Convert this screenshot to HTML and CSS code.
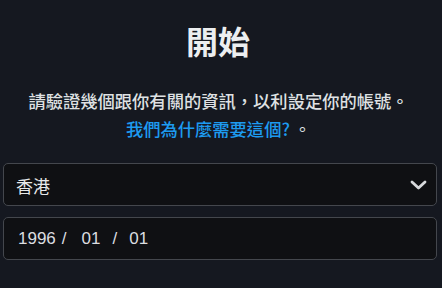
FILE: index.html
```html
<!DOCTYPE html>
<html lang="zh-Hant">
<head>
<meta charset="utf-8">
<title>開始</title>
<link rel="stylesheet" href="styles.css">
</head>
<body>
<main class="page">
  <h1 class="title">開始</h1>
  <p class="lead">請驗證幾個跟你有關的資訊<span class="punct">，</span>以利設定你的帳號<span class="punct">。</span></p>
  <p class="why"><a class="why-link" href="#">我們為什麼需要這個?</a> <span class="punct">。</span></p>
  <div class="fields">
    <div class="field select">
      <span class="value">香港</span>
      <svg class="chevron" width="17" height="10" viewBox="0 0 17 10" aria-hidden="true">
        <polyline points="2,2 8.5,8 15,2" fill="none" stroke="#d8dadd" stroke-width="2.8" stroke-linecap="round" stroke-linejoin="round"/>
      </svg>
    </div>
    <div class="field date">
      <span class="seg">1996</span><span class="sep sep-a">/</span><span class="seg">01</span><span class="sep sep-b">/</span><span class="seg">01</span>
    </div>
  </div>
</main>
</body>
</html>
```

FILE: styles.css
```css
html, body {
  margin: 0;
  padding: 0;
  background: #151820;
}

body {
  width: 442px;
  height: 288px;
  overflow: hidden;
  font-family: "Noto Sans CJK TC", "Noto Sans", sans-serif;
  color: #e7e9ea;
}

.page {
  display: flex;
  flex-direction: column;
  padding: 20px 5px 0 3px;
}

.title {
  margin: 0;
  padding-right: 4px;
  font-size: 32px;
  line-height: 40px;
  font-weight: 700;
  text-align: center;
  color: #eceef0;
}

.lead {
  margin: 27px 0 0;
  padding-right: 3px;
  font-size: 17.3px;
  line-height: 28px;
  text-align: center;
  color: #dfe1e3;
  font-weight: 500;
}

.punct {
  font-family: "Noto Sans CJK SC", "Noto Sans CJK TC", sans-serif;
}

.why {
  margin: 0;
  padding-right: 3px;
  font-size: 17.3px;
  line-height: 28px;
  text-align: center;
  color: #dfe1e3;
}

.why-link {
  color: #1d9bf0;
  text-decoration: none;
  font-weight: 500;
}

.fields {
  display: flex;
  flex-direction: column;
  gap: 11px;
  margin-top: 20px;
}

.field {
  height: 43px;
  box-sizing: border-box;
  border: 1px solid #44474d;
  border-radius: 5px;
  background: #0f1013;
  display: flex;
  align-items: center;
}

.select {
  padding: 0 9px 0 12px;
  justify-content: space-between;
}

.value {
  font-size: 17px;
  color: #e7e9ea;
  padding-top: 2px;
}

.chevron {
  display: block;
}

.date {
  padding-left: 14px;
  font-family: "Liberation Sans", Arial, sans-serif;
  font-size: 17px;
  color: #dcdee0;
}

.sep-a {
  margin: 0 15px 0 6px;
}

.sep-b {
  margin: 0 12px 0 12px;
}
```
